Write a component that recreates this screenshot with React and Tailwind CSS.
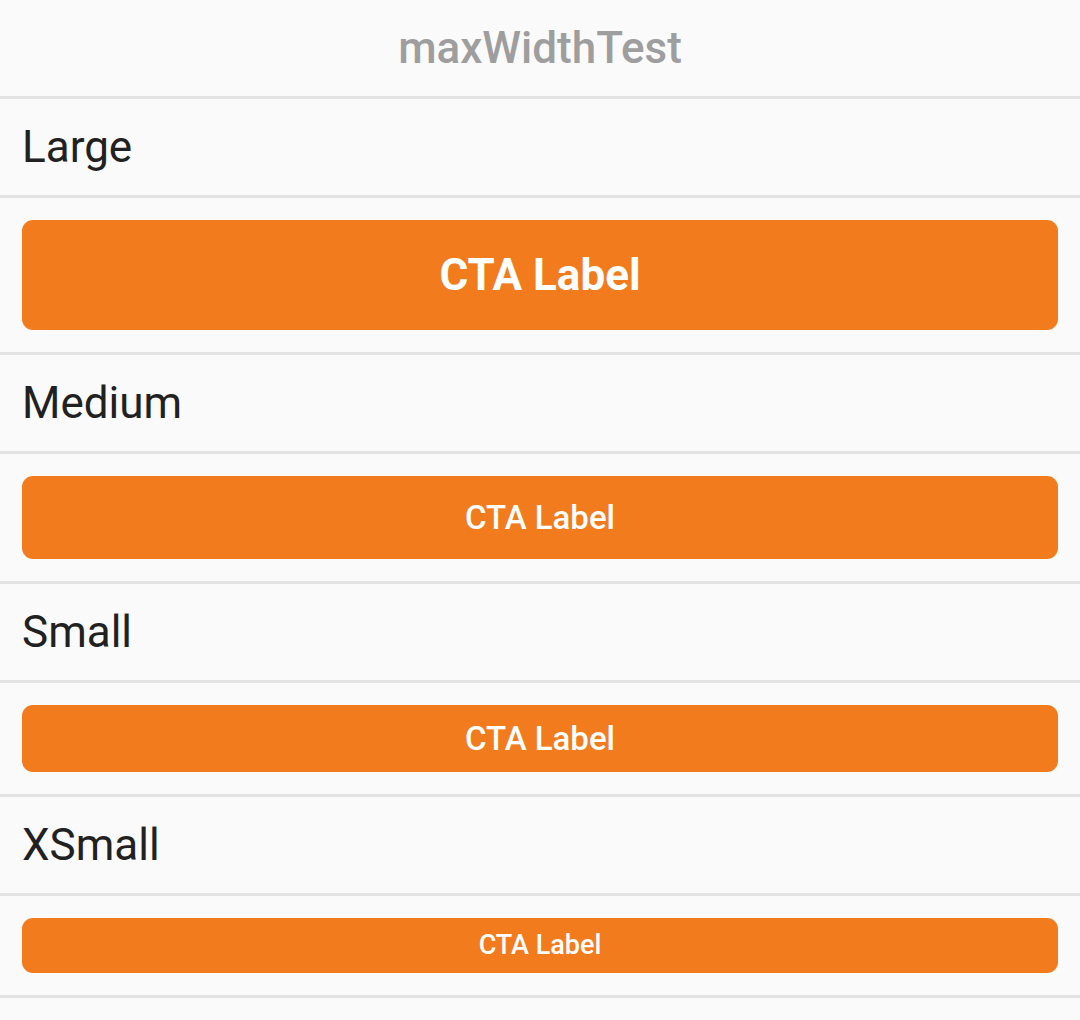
const sizes = [
  { name: 'Large', btn: 'h-[110px] text-[44px] font-bold' },
  { name: 'Medium', btn: 'h-[83px] text-[33px] font-medium' },
  { name: 'Small', btn: 'h-[67px] text-[33px] font-medium' },
  { name: 'XSmall', btn: 'h-[55px] text-[27px] font-medium' },
]

export default function App() {
  return (
    <div className="min-h-[1020px] bg-[#fafafa] font-['Roboto',sans-serif] text-[#212121]">
      {/* Title bar */}
      <div className="h-[99px] flex items-center justify-center border-b-[3px] border-[#e3e3e3]">
        <h1 className="text-[44px] font-medium text-[#9e9e9e]">maxWidthTest</h1>
      </div>

      {sizes.map((s) => (
        <div key={s.name}>
          <div className="h-[99px] flex items-center px-[22px] border-b-[3px] border-[#e3e3e3]">
            <span className="text-[44px]">{s.name}</span>
          </div>
          <div className="px-[22px] py-[22px] border-b-[3px] border-[#e3e3e3]">
            <button
              className={`w-full flex items-center justify-center rounded-[11px] bg-[#f27b1d] text-white ${s.btn}`}
            >
              CTA Label
            </button>
          </div>
        </div>
      ))}
    </div>
  )
}
